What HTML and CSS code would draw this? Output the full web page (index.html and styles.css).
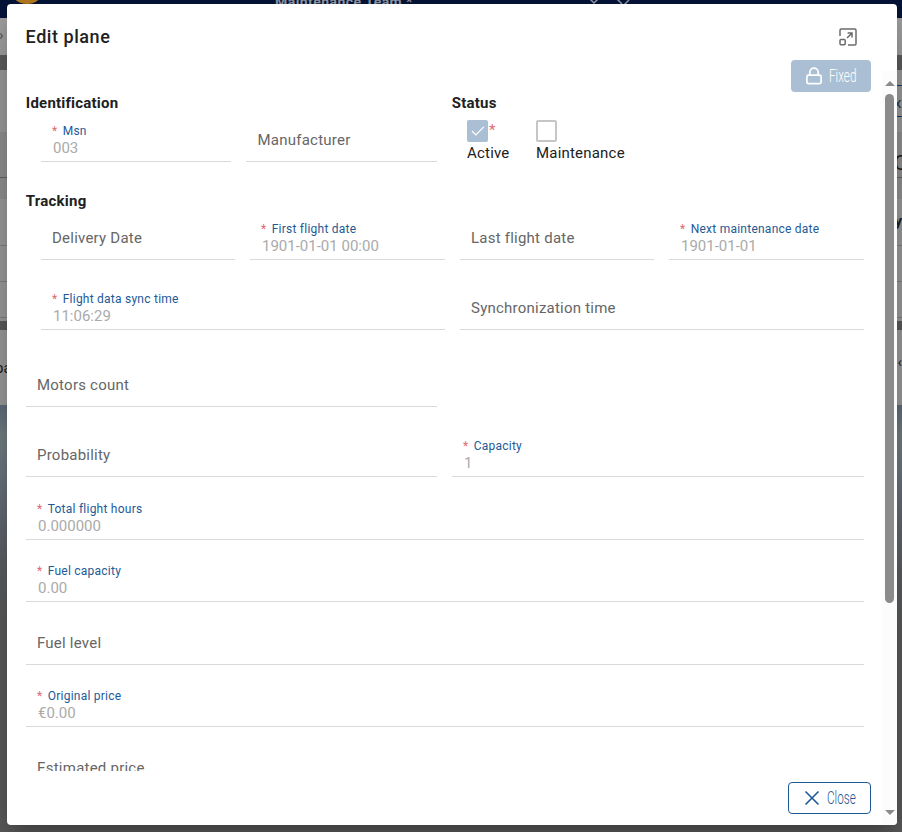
FILE: index.html
```html
<!DOCTYPE html>
<html lang="en">
<head>
<meta charset="utf-8">
<title>Edit plane</title>
<link rel="stylesheet" href="styles.css">
</head>
<body>
<div class="app">
  <div class="navbar"><span class="logo"></span><span class="team">Maintenance Team *</span>
    <svg class="nav-icons" viewBox="0 0 50 6"><path d="M2 -3L8 3L14 -3M28 -4L36 4M43 0L38 5" fill="none" stroke="#929aa9" stroke-width="1.5"/></svg>
  </div>
  <div class="crumb"><span>›</span></div>
  <div class="band"></div>
  <div class="tools"><span class="export">xp</span></div>
  <div class="filters"><span>C</span></div>
  <div class="gap"></div>
  <div class="row head"><span>y</span></div>
  <div class="row"></div>
  <div class="row"></div>
  <div class="shade"></div>
  <div class="pager"><span>pa</span><span>‹</span></div>
  <div class="photo"></div>
</div>

<div class="dialog">
  <div class="main">
    <header class="title-bar">
      <h1>Edit plane</h1>
      <svg class="expand" viewBox="0 0 18 18" fill="none" stroke="#6b6b6b" stroke-width="1.5"><path d="M1 8V2.2Q1 1 2.2 1H15.8Q17 1 17 2.2V15.8Q17 17 15.8 17H9"/><rect x="1" y="11.5" width="5.2" height="5.2" rx="1"/><path d="M8 10L12.8 5.2M8.6 5H13V9.4"/></svg>
    </header>
    <div class="actions"><button class="btn fixed">
      <svg viewBox="0 0 18 18" fill="none" stroke="#fff" stroke-width="1.7"><rect x="1.9" y="8.2" width="14.2" height="8.4" rx="1.6"/><path d="M4.8 8V5.3A4.2 4.2 0 0 1 13.2 5.3V8"/></svg><span class="narrow">Fixed</span></button></div>
    <div class="form">
      <div class="groups">
        <section>
          <h2>Identification</h2>
          <div class="fields ident">
            <div class="field filled"><label><i>*</i>Msn</label><b>003</b></div>
            <div class="field"><label>Manufacturer</label></div>
          </div>
        </section>
        <section>
          <h2>Status</h2>
          <div class="checks">
            <div class="check"><span class="box on"><svg viewBox="0 0 21 21"><path d="M5 11L8.8 15L16.8 6.8" fill="none" stroke="#fff" stroke-width="1.2"/></svg></span><i>*</i><span class="cap">Active</span></div>
            <div class="check"><span class="box"></span><span class="cap">Maintenance</span></div>
          </div>
        </section>
      </div>
      <section class="tracking">
        <h2>Tracking</h2>
        <div class="fields four">
          <div class="field"><label>Delivery Date</label></div>
          <div class="field filled"><label><i>*</i>First flight date</label><b>1901-01-01 00:00</b></div>
          <div class="field"><label>Last flight date</label></div>
          <div class="field filled"><label><i>*</i>Next maintenance date</label><b>1901-01-01</b></div>
        </div>
        <div class="fields two">
          <div class="field filled"><label><i>*</i>Flight data sync time</label><b>11:06:29</b></div>
          <div class="field"><label>Synchronization time</label></div>
        </div>
      </section>
      <div class="pair">
        <div class="field"><label>Motors count</label></div><div></div>
        <div class="field"><label>Probability</label></div>
        <div class="field filled"><label><i>*</i>Capacity</label><b>1</b></div>
      </div>
      <div class="stack">
        <div class="field filled"><label><i>*</i>Total flight hours</label><b>0.000000</b></div>
        <div class="field filled"><label><i>*</i>Fuel capacity</label><b>0.00</b></div>
        <div class="field"><label>Fuel level</label></div>
        <div class="field filled"><label><i>*</i>Original price</label><b>€0.00</b></div>
        <div class="field"><label>Estimated price</label></div>
      </div>
    </div>
    <footer><button class="btn close"><svg viewBox="0 0 18 18"><path d="M2.5 2.5L15.5 15.5M15.5 2.5L2.5 15.5" fill="none" stroke="#1d5a96" stroke-width="1.6"/></svg><span class="narrow">Close</span></button></footer>
  </div>
  <div class="scrollbar"><span class="up"></span><span class="thumb"></span><span class="down"></span></div>
</div>
</body>
</html>
```
FILE: styles.css
```css
* { box-sizing: border-box; }
body { margin: 0; height: 832px; overflow: hidden; font-family: Roboto, sans-serif; font-size: 15px; color: #212121; }
i { font-style: normal; color: #e06a70; }
b { font-weight: 400; }

.app { height: 832px; background: #9c9c9c; overflow: hidden; }
.navbar { height: 18px; background: #06143a; display: flex; align-items: flex-start; overflow: hidden; }
.logo { width: 36px; height: 36px; flex: none; margin: -32px 0 0 9px; border-radius: 50%; background: #b67b1f; }
.team { margin: -6px 0 0 230px; width: 138px; white-space: nowrap; font-weight: 700; font-size: 14px; line-height: 16px; color: #929aa9; letter-spacing: .45px; }
.nav-icons { width: 50px; height: 6px; margin-left: 173px; }
.crumb { height: 37px; background: #a2a2a2; line-height: 34px; color: #555; }
.crumb span { margin-left: -1px; }
.band { height: 15px; background: #5e5e5e; }
.tools { height: 62px; padding-top: 15px; display: flex; justify-content: flex-end; }
.export { width: 40px; height: 32px; padding-left: 31px; border: 1px solid #153e68; border-right: 0; color: #153e68; line-height: 34px; }
.filters { height: 46px; background: #929292; border-bottom: 1px solid #666; text-align: right; font-size: 20px; line-height: 62px; }
.filters span { margin-right: -5px; }
.gap { height: 21px; background: #929292; }
.row { height: 36px; border-bottom: 1px solid #808080; text-align: right; }
.head { height: 47px; font-weight: 700; line-height: 44px; }
.shade { height: 9px; margin-top: 3px; background: #5a5a5a; }
.pager { height: 75px; display: flex; justify-content: space-between; line-height: 76px; }
.pager span:first-child { margin-left: -5px; }
.pager span:last-child { line-height: 64px; }
.photo { height: 427px; background: linear-gradient(#5f6d7c 0, #728083 30px, #6b7680 70px, #626770 120px, #5c5e60 170px, #5c5c5c 220px, #5c5c5c); }

.dialog { position: absolute; left: 7px; top: 4px; width: 890px; height: 821px; background: #fff; border-radius: 4px; display: flex; box-shadow: 0 11px 15px -7px #0003, 0 24px 38px 3px #0000001c, 0 9px 46px 8px #0000001a; overflow: hidden; }
.main { width: 875px; display: flex; flex-direction: column; }
.title-bar { height: 56px; padding: 0 25px 0 18.6px; display: flex; justify-content: space-between; }
h1 { margin: 21px 0 0; font-size: 18px; line-height: 24px; font-weight: 500; letter-spacing: .55px; }
.expand { width: 18px; height: 18px; margin-top: 24px; }
.actions { height: 32px; padding-right: 11px; display: flex; justify-content: flex-end; }
.btn { display: flex; align-items: center; height: 32px; border-radius: 4px; font-family: Roboto, sans-serif; font-size: 17.5px; padding: 0; }
.btn svg { width: 18px; height: 18px; flex: none; }
.narrow { width: 29px; margin-left: 6px; transform: scaleX(.67); transform-origin: left; font-weight: 300; }
.fixed { width: 80px; border: 0; background: #abbfd4; color: #fff; padding-left: 14px; }
.fixed .narrow { font-weight: 350; }
.close { width: 83px; border: 1px solid #1d5a96; background: #fff; color: #1d5a96; padding-left: 14px; }

.form { height: 679px; overflow: hidden; padding-left: 19px; padding-right: 18px; }
.groups, .pair { display: grid; grid-template-columns: 411px 412px; column-gap: 15px; }
.groups { height: 70px; }
h2 { margin: 0 0 0 -.2px; font-size: 15px; line-height: 22px; font-weight: 700; letter-spacing: .22px; }
.fields { display: grid; padding-left: 15px; column-gap: 15px; }
.ident { grid-template-columns: 190px 191px; padding-top: 4px; }
.ident .field:last-child { padding-left: 11.5px; }
.four { grid-template-columns: 194px 195px 194px 195px; padding-top: 4px; }
.two { grid-template-columns: 404px 404px; padding-top: 26px; }
.tracking { padding-top: 28px; }
.pair { padding-top: 33px; row-gap: 26px; }
.stack { display: grid; padding-top: 19px; row-gap: 18.4px; width: 838px; }
.stack .field:not(.filled) { padding-top: 1px; }
.field { height: 44px; border-bottom: 1px solid #d9d9d9; padding-left: 11px; display: flex; flex-direction: column; justify-content: center; color: #666; letter-spacing: .23px; white-space: nowrap; }
.field.filled { justify-content: flex-start; padding-top: 4px; }
.filled label { font-size: 12px; line-height: 18px; color: #1d5a96; letter-spacing: .24px; }
.filled i { display: inline-block; width: 10.7px; }
.filled b { margin-left: 1px; line-height: 16px; color: #aaa; letter-spacing: 0; }
.checks { display: flex; padding: 6px 0 0 15px; gap: 26px; }
.check { display: flex; flex-wrap: wrap; width: 43px; align-content: flex-start; }
.box { width: 21px; height: 22px; border: 2px solid #c6c6c6; border-radius: 2px; }
.box.on { border: 0; background: #abbfd4; }
.box svg { display: block; }
.check i { margin-left: 1px; line-height: 20px; }
.cap { width: 100%; line-height: 22px; letter-spacing: .2px; }
footer { padding: 11px 11px 0 0; display: flex; justify-content: flex-end; }

.scrollbar { width: 15px; height: 754px; margin-top: 67px; background: #fcfcfc; display: flex; flex-direction: column; align-items: center; }
.up, .down { width: 0; border: 5px solid transparent; }
.up { margin-top: 10px; border-top: 0; border-bottom-color: #8b8b8b; }
.thumb { width: 9px; height: 509px; margin-top: 8px; border-radius: 5px; background: #8b8b8b; }
.down { margin-top: auto; margin-bottom: 10px; border-bottom: 0; border-top-color: #8b8b8b; }
```
